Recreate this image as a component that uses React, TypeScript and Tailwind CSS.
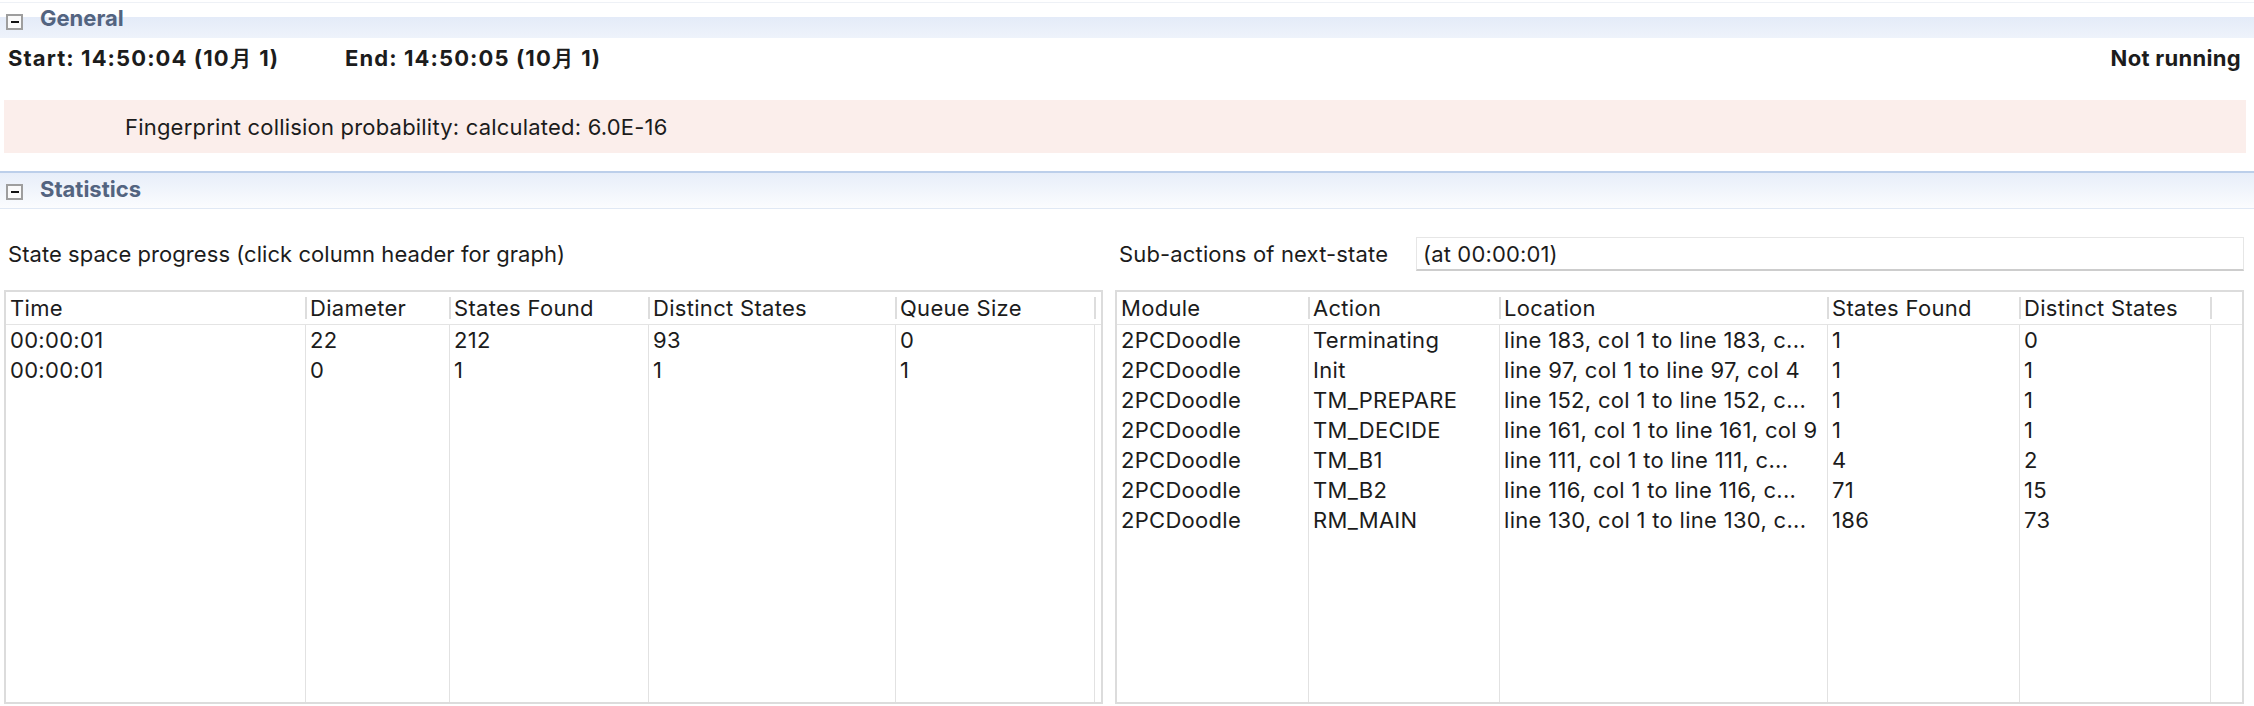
import React from 'react';

type Col = { title: string; width: string };

const progressCols: Col[] = [
  { title: 'Time', width: 'w-[299px]' },
  { title: 'Diameter', width: 'w-[144px]' },
  { title: 'States Found', width: 'w-[199px]' },
  { title: 'Distinct States', width: 'w-[247px]' },
  { title: 'Queue Size', width: 'w-[199px]' },
  { title: '', width: 'w-[7px]' },
];

const progressRows = [
  ['00:00:01', '22', '212', '93', '0'],
  ['00:00:01', '0', '1', '1', '1'],
];

const actionCols: Col[] = [
  { title: 'Module', width: 'w-[191px]' },
  { title: 'Action', width: 'w-[191px]' },
  { title: 'Location', width: 'w-[328px]' },
  { title: 'States Found', width: 'w-[192px]' },
  { title: 'Distinct States', width: 'w-[191px]' },
  { title: '', width: 'w-[32px]' },
];

const actionRows = [
  ['2PCDoodle', 'Terminating', 'line 183, col 1 to line 183, c...', '1', '0'],
  ['2PCDoodle', 'Init', 'line 97, col 1 to line 97, col 4', '1', '1'],
  ['2PCDoodle', 'TM_PREPARE', 'line 152, col 1 to line 152, c...', '1', '1'],
  ['2PCDoodle', 'TM_DECIDE', 'line 161, col 1 to line 161, col 9', '1', '1'],
  ['2PCDoodle', 'TM_B1', 'line 111, col 1 to line 111, c...', '4', '2'],
  ['2PCDoodle', 'TM_B2', 'line 116, col 1 to line 116, c...', '71', '15'],
  ['2PCDoodle', 'RM_MAIN', 'line 130, col 1 to line 130, c...', '186', '73'],
];

function Toggle() {
  return (
    <div className="w-[17px] h-[16px] border-2 border-[#9e9e9e] bg-[#fafafa] flex items-center justify-center shrink-0">
      <div className="w-[8px] h-[2px] bg-[#111]" />
    </div>
  );
}

function DataTable({ cols, rows, width }: { cols: Col[]; rows: string[][]; width: string }) {
  return (
    <div className={`${width} h-[414px] border-2 border-[#dcdcdc] flex bg-white tracking-[0.3px]`}>
      {cols.map((col, ci) => (
        <div key={ci} className={`${col.width} shrink-0 flex flex-col`}>
          <div className="h-[33px] border-b border-[#e4e4e4] flex items-center shrink-0">
            {ci > 0 && <div className="w-[2px] h-[22px] bg-[#dddddd] shrink-0" />}
            <span className={`${ci > 0 ? 'pl-[3px]' : 'pl-[4px]'} whitespace-nowrap`}>{col.title}</span>
          </div>
          <div className={`flex-1 flex flex-col ${ci > 0 ? 'border-l border-[#e2e2e2]' : ''}`}>
            {col.title !== '' &&
              rows.map((row, ri) => (
                <div key={ri} className="h-[30px] flex items-center pl-[4px] whitespace-nowrap overflow-hidden">
                  {row[ci]}
                </div>
              ))}
          </div>
        </div>
      ))}
    </div>
  );
}

export default function App() {
  return (
    <div className="w-[2254px] h-[706px] overflow-hidden bg-white pt-[2px] text-[22px] leading-[22px] text-[#1c1c1c] font-['Inter','Liberation_Sans',sans-serif]">
      {/* General */}
      <div className="h-[36px] border-t border-[#eef1f6] flex items-start bg-[linear-gradient(to_bottom,#ffffff_0px,#ffffff_14px,#e4ebf8_14px,#eef3fb_35px)]">
        <div className="ml-[6px] mt-[11px]">
          <Toggle />
        </div>
        <span className="ml-[17px] mt-[4px] text-[22px] font-bold text-[#536480]">General</span>
      </div>

      <div className="h-[40px] flex items-center pl-[8px] pr-[13px] text-[22px] font-bold tracking-[1.1px]">
        <span className="w-[337px]">Start: 14:50:04 (10月 1)</span>
        <span>End: 14:50:05 (10月 1)</span>
        <span className="ml-auto tracking-[0.3px]">Not running</span>
      </div>

      <div className="mt-[22px] ml-[4px] mr-[8px] h-[53px] bg-[#fbeeeb] flex items-center pl-[121px] tracking-[0.2px]">
        Fingerprint collision probability: calculated: 6.0E-16
      </div>

      {/* Statistics */}
      <div className="mt-[18px] h-[38px] border-t-2 border-b border-t-[#bccfea] border-b-[#e0e8f4] flex items-start bg-[linear-gradient(to_bottom,#e7eef9,#fbfcfe)]">
        <div className="ml-[6px] mt-[11px]">
          <Toggle />
        </div>
        <span className="ml-[17px] mt-[5px] text-[22px] font-bold text-[#536480]">Statistics</span>
      </div>

      <div className="flex pl-[4px] gap-[12px]">
        <div className="flex flex-col">
          <div className="mt-[28px] h-[34px] flex items-center pl-[4px] tracking-[0.05px]">
            State space progress (click column header for graph)
          </div>
          <div className="mt-[19px]">
            <DataTable cols={progressCols} rows={progressRows} width="w-[1099px]" />
          </div>
        </div>

        <div className="flex flex-col">
          <div className="mt-[28px] h-[34px] flex items-center tracking-[0.15px]">
            <span className="w-[301px] pl-[4px]">Sub-actions of next-state</span>
            <div className="w-[828px] h-[34px] border border-[#e6e6e6] border-b-2 border-b-[#cdcdcd] flex items-center pl-[6px]">
              (at 00:00:01)
            </div>
          </div>
          <div className="mt-[19px]">
            <DataTable cols={actionCols} rows={actionRows} width="w-[1129px]" />
          </div>
        </div>
      </div>
    </div>
  );
}
